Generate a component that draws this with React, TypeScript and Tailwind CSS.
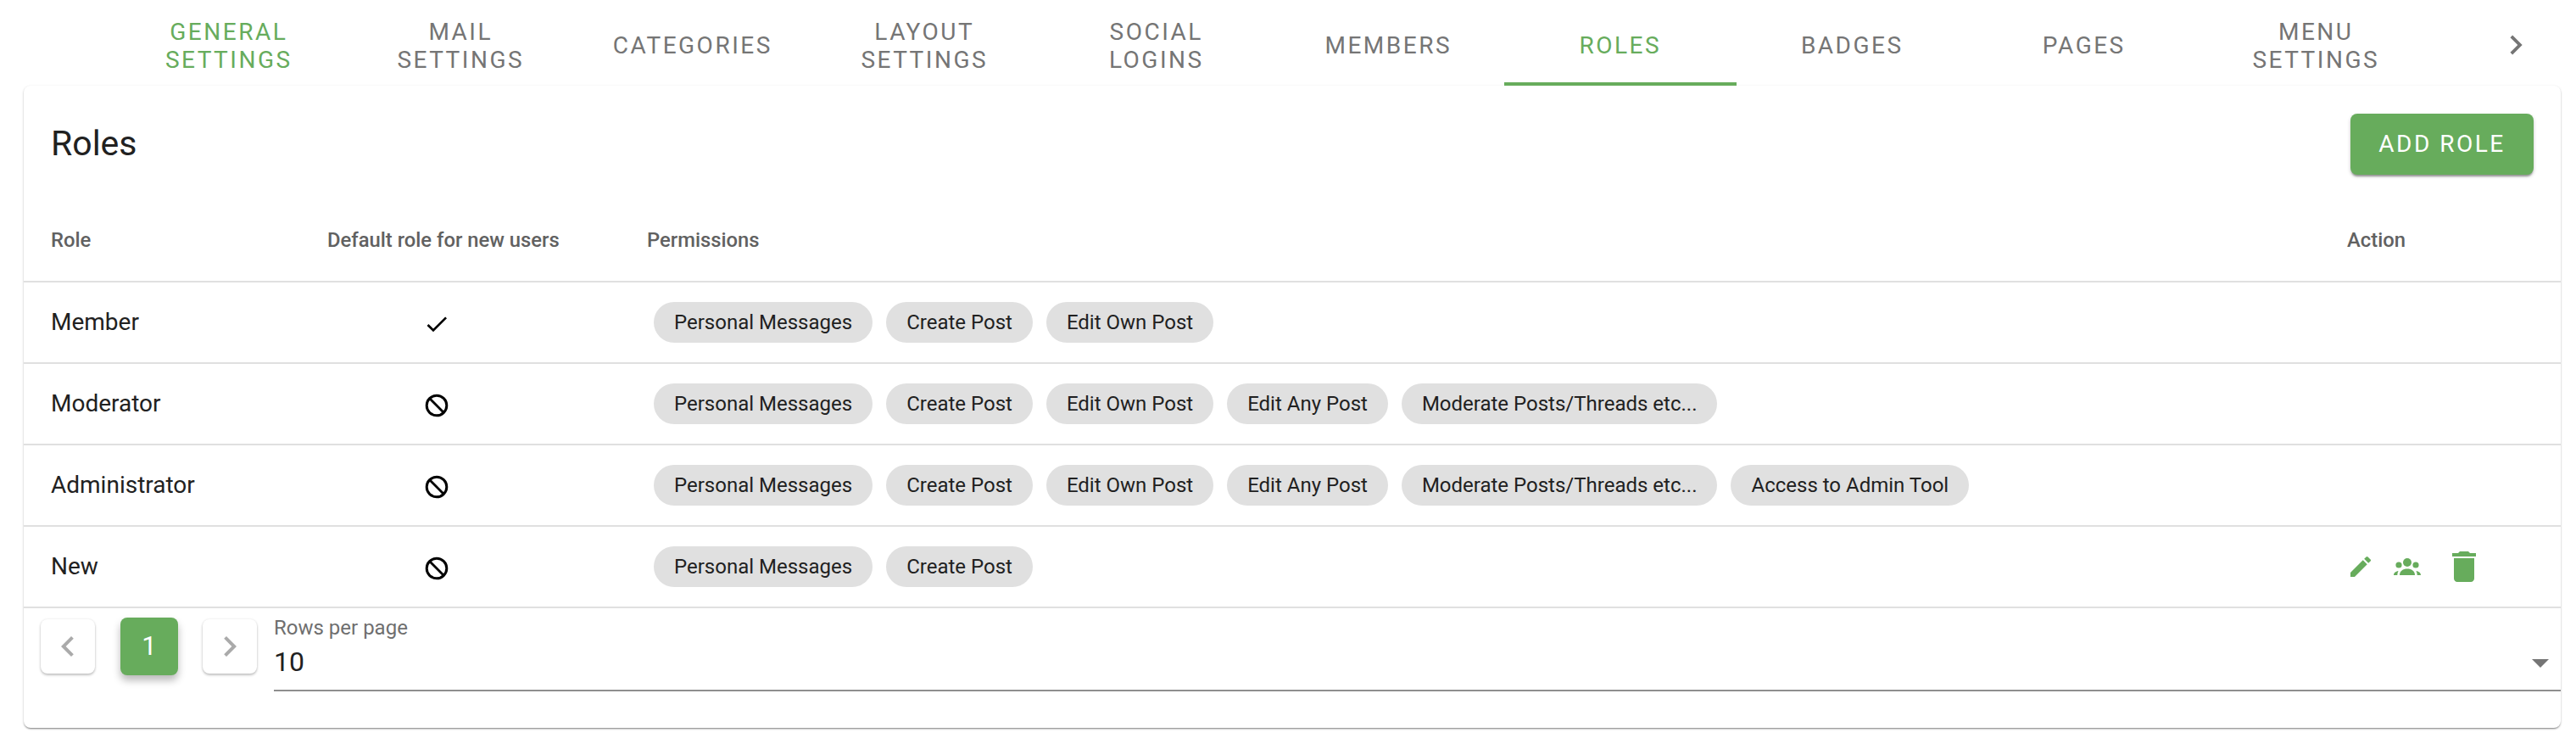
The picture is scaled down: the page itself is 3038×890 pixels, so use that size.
import React from "react";

const Tab = ({ label, active }: { label: React.ReactNode; active?: boolean }) => (
  <div className={`relative flex h-[101px] w-[273.5px] shrink-0 items-center justify-center pt-[6px] text-center text-[28px] leading-[33px] tracking-[2.5px] ${active ? "text-[#67ac5c]" : "text-[#757575]"}`}>
    <span>{label}</span>
  </div>
);

const Chip = ({ t }: { t: string }) => (
  <span className="flex h-[48px] items-center rounded-full bg-[#e0e0e0] px-[24px] text-[24px] text-[#212121]">{t}</span>
);

const Chev = ({ dir, className }: { dir: "l" | "r"; className: string }) => (
  <svg viewBox="0 0 24 24" className={className} fill="currentColor">
    <path d={dir === "r" ? "M10 6 8.59 7.41 13.17 12l-4.58 4.59L10 18l6-6z" : "M15.41 7.41 14 6l-6 6 6 6 1.41-1.41L10.83 12z"} />
  </svg>
);

const Ban = () => (
  <svg viewBox="0 0 32 32" className="mt-[3px] h-[32px] w-[32px]" fill="none" stroke="#000">
    <circle cx="16" cy="16" r="11.8" strokeWidth="3" />
    <path d="M7.8 7.8 24.2 24.2" strokeWidth="2.8" />
  </svg>
);

const Check = () => (
  <svg viewBox="0 0 24 24" className="mt-[3px] h-[32px] w-[32px]" fill="#000">
    <path d="M9 16.17 4.83 12l-1.42 1.41L9 19 21 7l-1.41-1.41z" />
  </svg>
);

const perms = ["Personal Messages", "Create Post", "Edit Own Post", "Edit Any Post", "Moderate Posts/Threads etc...", "Access to Admin Tool"];

const rows = [
  { name: "Member", def: true, n: 3 },
  { name: "Moderator", def: false, n: 5 },
  { name: "Administrator", def: false, n: 6 },
  { name: "New", def: false, n: 2, actions: true },
];

export default function App() {
  return (
    <div className="h-[890px] w-[3038px] overflow-hidden bg-white font-['Roboto',sans-serif]">
      <div className="relative flex h-[101px] pl-[133px]">
        <Tab label={<>GENERAL<br />SETTINGS</>} active />
        <Tab label={<>MAIL<br />SETTINGS</>} />
        <Tab label="CATEGORIES" />
        <Tab label={<>LAYOUT<br />SETTINGS</>} />
        <Tab label={<>SOCIAL<br />LOGINS</>} />
        <Tab label="MEMBERS" />
        <div className="relative">
          <Tab label="ROLES" active />
          <div className="absolute inset-x-0 bottom-0 h-[4px] bg-[#67ac5c]" />
        </div>
        <Tab label="BADGES" />
        <Tab label="PAGES" />
        <Tab label={<>MENU<br />SETTINGS</>} />
        <div className="flex flex-1 items-center justify-center pl-[28px] pt-[5px]">
          <Chev dir="r" className="h-[46px] w-[46px] text-[#757575]" />
        </div>
      </div>

      <div className="ml-[28px] mr-[18px] h-[757px] rounded-[8px] bg-white shadow-[0_2px_2px_-1px_rgba(0,0,0,0.35),0_1px_3px_0_rgba(0,0,0,0.15),0_1px_2px_0_rgba(0,0,0,0.1)]">
        <div className="flex h-[134px] items-center justify-between pl-[32px] pr-[32px] pt-[3px]">
          <h1 className="text-[41px] font-normal text-[#212121]">Roles</h1>
          <button className="flex h-[72px] w-[216px] items-center justify-center rounded-[8px] bg-[#67ac5c] text-[28px] tracking-[2.5px] text-white shadow-[0_3px_2px_-1px_rgba(0,0,0,0.3),0_2px_4px_0_rgba(0,0,0,0.2)]">
            ADD ROLE
          </button>
        </div>

        <div className="flex h-[98px] items-center border-b-2 border-[#e0e0e0] pt-[2px] text-[23.8px] font-medium text-[#616161]">
          <div className="w-[358px] pl-[32px]">Role</div>
          <div className="w-[377px]">Default role for new users</div>
          <div className="flex-1">Permissions</div>
          <div className="w-[252px]">Action</div>
        </div>

        {rows.map((r) => (
          <div key={r.name} className="flex h-[96px] items-center border-b-2 border-[#e0e0e0]">
            <div className="w-[358px] pl-[32px] text-[28px] text-[#212121]">{r.name}</div>
            <div className="flex w-[385px] items-center pl-[113px]">
              {r.def ? <Check /> : <Ban />}
            </div>
            <div className="flex flex-1 gap-[16px]">
              {perms.slice(0, r.n).map((p) => <Chip key={p} t={p} />)}
            </div>
            {r.actions && (
              <div className="flex w-[252px] items-center text-[#67ac5c]">
                <svg viewBox="0 0 24 24" className="h-[32px] w-[32px]" fill="currentColor">
                  <path d="M3 17.25V21h3.75L17.81 9.94l-3.75-3.75L3 17.25zM20.71 7.04a.996.996 0 0 0 0-1.41l-2.34-2.34a.996.996 0 0 0-1.41 0l-1.83 1.83 3.75 3.75 1.83-1.83z" />
                </svg>
                <svg viewBox="0 0 32 20" className="ml-[23px] h-[20px] w-[32px]" fill="currentColor">
                  <circle cx="16" cy="5" r="5" />
                  <circle cx="6" cy="8" r="3.6" />
                  <circle cx="26" cy="8" r="3.6" />
                  <path d="M7 20c0-5 4-7.5 9-7.5s9 2.5 9 7.5z" />
                  <path d="M0 20c0-2.2 2-4.6 5.5-5-.8 1.5-1.2 3.2-1.2 5z" />
                  <path d="M32 20c0-2.2-2-4.6-5.5-5 .8 1.5 1.2 3.2 1.2 5z" />
                </svg>
                <svg viewBox="0 0 24 24" className="ml-[27px] h-[48px] w-[48px]" fill="currentColor">
                  <path d="M6 19c0 1.1.9 2 2 2h8c1.1 0 2-.9 2-2V7H6v12zM19 4h-3.5l-1-1h-5l-1 1H5v2h14V4z" />
                </svg>
              </div>
            )}
          </div>
        ))}

        <div className="flex pl-[20px] pt-[11px]">
          <div className="flex h-[68px] items-center">
            <button className="flex h-[64px] w-[64px] items-center justify-center rounded-[8px] bg-white text-[#aaaaaa] shadow-[0_2px_3px_rgba(0,0,0,0.22),0_0_3px_rgba(0,0,0,0.1)]">
              <Chev dir="l" className="h-[48px] w-[48px]" />
            </button>
            <button className="ml-[30px] flex h-[68px] w-[68px] items-center justify-center rounded-[8px] bg-[#67ac5c] text-[31px] text-white shadow-[0_6px_10px_rgba(0,0,0,0.28)]">
              1
            </button>
            <button className="ml-[29px] flex h-[64px] w-[64px] items-center justify-center rounded-[8px] bg-white text-[#aaaaaa] shadow-[0_2px_3px_rgba(0,0,0,0.22),0_0_3px_rgba(0,0,0,0.1)]">
              <Chev dir="r" className="h-[48px] w-[48px]" />
            </button>
          </div>
          <div className="relative ml-[20px] h-[87px] flex-1 border-b-2 border-[#8f8f8f]">
            <div className="-mt-[2px] text-[24px] leading-[28px] text-[#6f6f6f]">Rows per page</div>
            <div className="mt-[7px] text-[32px] leading-[38px] text-[#212121]">10</div>
            <svg viewBox="0 0 20 10" className="absolute right-[14px] top-[49px] h-[10px] w-[20px]" fill="#757575">
              <path d="M0 0h20L10 10z" />
            </svg>
          </div>
        </div>
      </div>
    </div>
  );
}
